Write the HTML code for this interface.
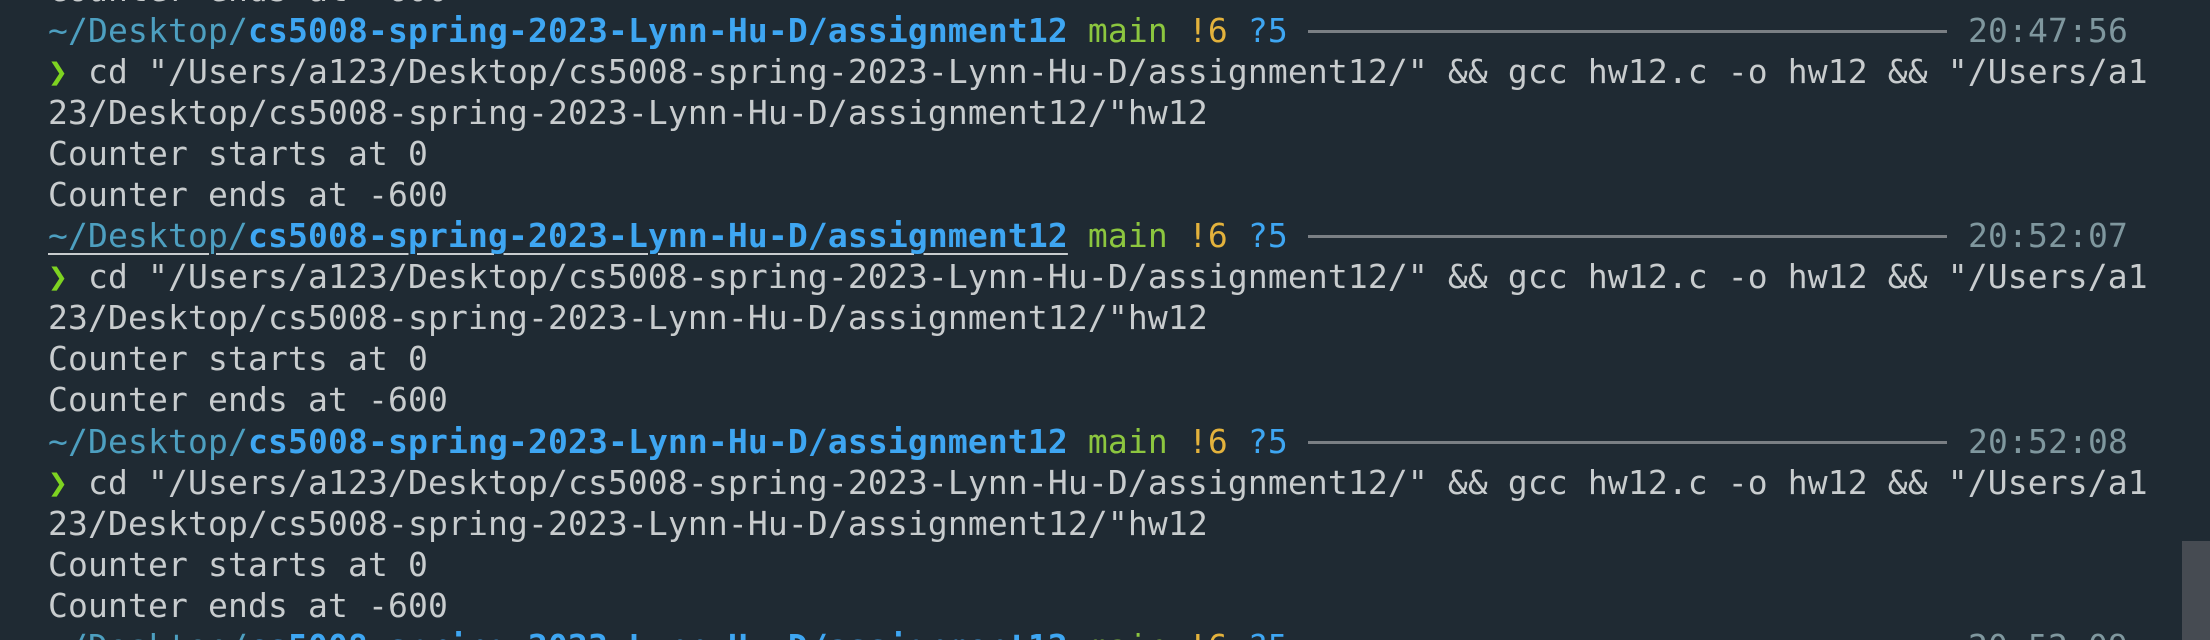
<!DOCTYPE html>
<html><head><meta charset="utf-8"><style>
html,body{margin:0;padding:0;background:#1f2a33;width:2210px;height:640px;overflow:hidden;position:relative}
#t{position:absolute;left:48px;top:-31px;font-family:"DejaVu Sans Mono","Liberation Mono",monospace;font-size:33px;letter-spacing:0.13px;line-height:41.05px;color:#c8ccce}
.l{height:41.05px;position:relative;white-space:pre}
.d{color:#4d9fc0}.b{color:#3ea6f2;font-weight:bold}.g{color:#8cc63f}.y{color:#e3b23c}.q{color:#3ea6f2}
.a{color:#7ed321}.tm{color:#7f979e;position:absolute;left:1920px;top:0}
.ln{position:absolute;left:1260px;width:639px;top:20px;height:3px;background:#7a7f84}
.u{text-decoration:underline;text-decoration-color:#c8ccce;text-decoration-thickness:2px;text-underline-offset:6px}
#sb{position:absolute;left:2182px;top:541px;width:28px;height:99px;background:#464b52}
</style></head><body>
<div id="t"><div class="l">Counter ends at -600</div><div class="l"><span class="d">~/Desktop/</span><span class="b">cs5008-spring-2023-Lynn-Hu-D/assignment12</span> <span class="g">main</span> <span class="y">!6</span> <span class="q">?5</span><span class="ln"></span><span class="tm">20:47:56</span></div><div class="l"><span class="a">❯</span> cd "/Users/a123/Desktop/cs5008-spring-2023-Lynn-Hu-D/assignment12/" &amp;&amp; gcc hw12.c -o hw12 &amp;&amp; "/Users/a1</div><div class="l">23/Desktop/cs5008-spring-2023-Lynn-Hu-D/assignment12/"hw12</div><div class="l">Counter starts at 0</div><div class="l">Counter ends at -600</div><div class="l"><span class="u"><span class="d">~/Desktop/</span><span class="b">cs5008-spring-2023-Lynn-Hu-D/assignment12</span></span> <span class="g">main</span> <span class="y">!6</span> <span class="q">?5</span><span class="ln"></span><span class="tm">20:52:07</span></div><div class="l"><span class="a">❯</span> cd "/Users/a123/Desktop/cs5008-spring-2023-Lynn-Hu-D/assignment12/" &amp;&amp; gcc hw12.c -o hw12 &amp;&amp; "/Users/a1</div><div class="l">23/Desktop/cs5008-spring-2023-Lynn-Hu-D/assignment12/"hw12</div><div class="l">Counter starts at 0</div><div class="l">Counter ends at -600</div><div class="l"><span class="d">~/Desktop/</span><span class="b">cs5008-spring-2023-Lynn-Hu-D/assignment12</span> <span class="g">main</span> <span class="y">!6</span> <span class="q">?5</span><span class="ln"></span><span class="tm">20:52:08</span></div><div class="l"><span class="a">❯</span> cd "/Users/a123/Desktop/cs5008-spring-2023-Lynn-Hu-D/assignment12/" &amp;&amp; gcc hw12.c -o hw12 &amp;&amp; "/Users/a1</div><div class="l">23/Desktop/cs5008-spring-2023-Lynn-Hu-D/assignment12/"hw12</div><div class="l">Counter starts at 0</div><div class="l">Counter ends at -600</div><div class="l"><span class="d">~/Desktop/</span><span class="b">cs5008-spring-2023-Lynn-Hu-D/assignment12</span> <span class="g">main</span> <span class="y">!6</span> <span class="q">?5</span><span class="ln"></span><span class="tm">20:52:09</span></div></div>
<div id="sb"></div>
</body></html>
